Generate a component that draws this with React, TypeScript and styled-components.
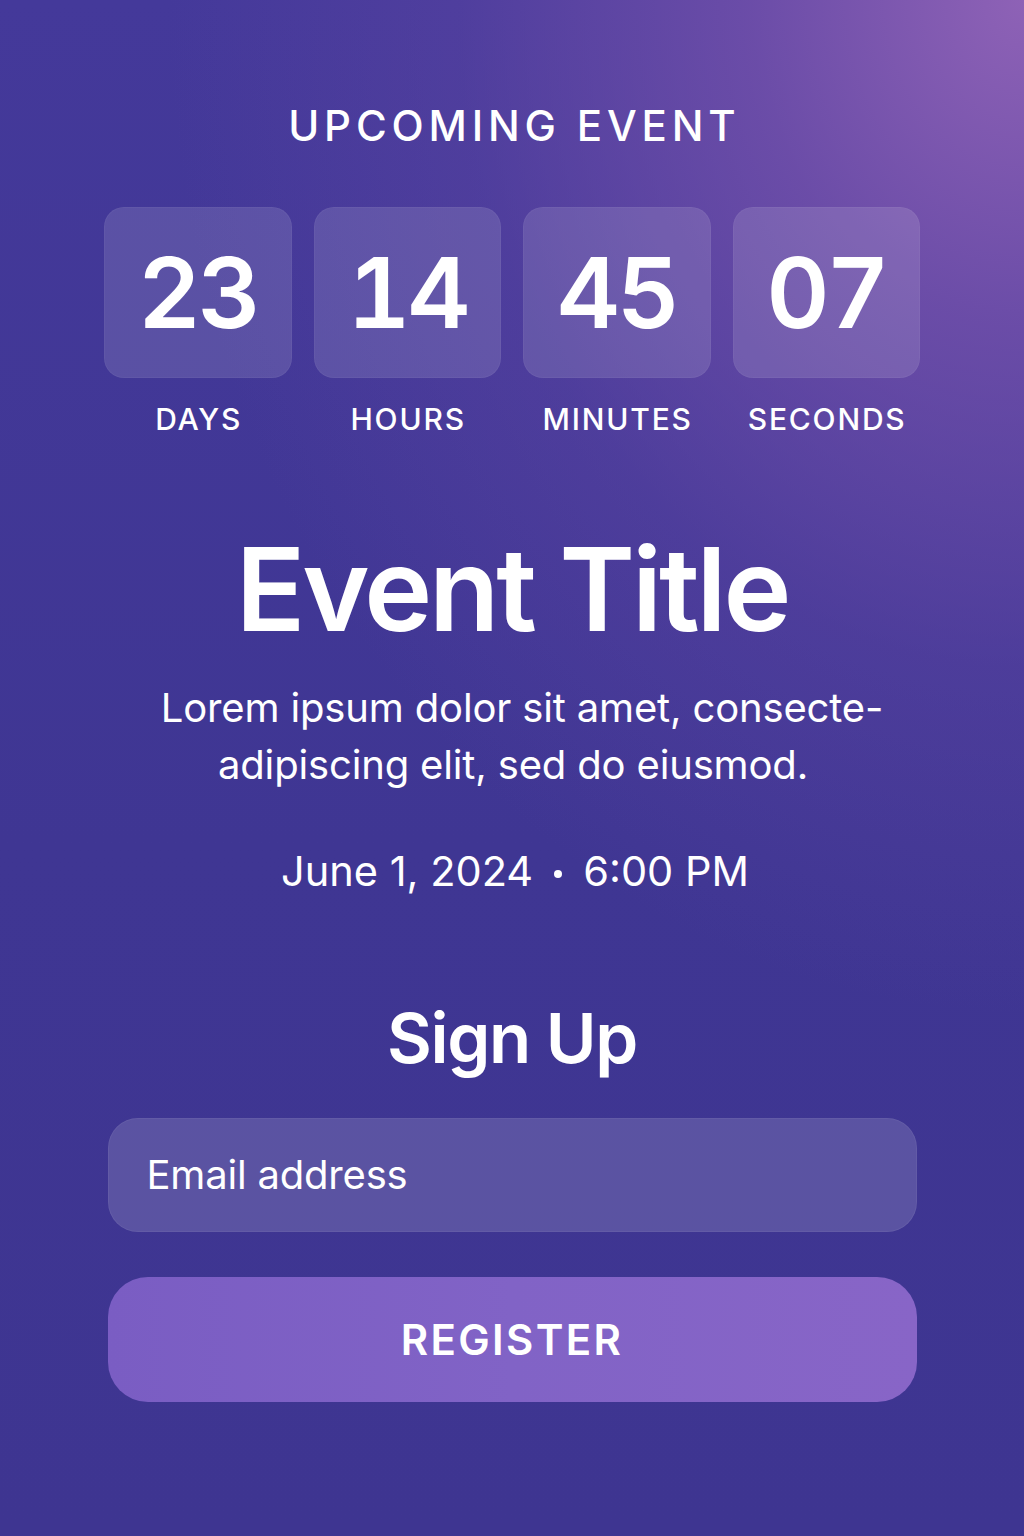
import React from "react";
import styled, { createGlobalStyle } from "styled-components";

const GlobalStyle = createGlobalStyle`
  html, body {
    margin: 0;
    padding: 0;
  }
  body {
    font-family: Inter, "Noto Sans", "Liberation Sans", sans-serif;
    color: #ffffff;
    background: #3d3592;
  }
  * { box-sizing: border-box; }
`;

const Page = styled.main`
  width: 1024px;
  height: 1536px;
  overflow: hidden;
  display: flex;
  flex-direction: column;
  align-items: center;
  padding-top: 101px;
  background:
    radial-gradient(ellipse 95% 75% at 100% 0%, rgba(142, 98, 182, 1) 0%, rgba(118, 82, 172, 0.78) 28%, rgba(96, 70, 164, 0.4) 58%, rgba(70, 58, 152, 0) 88%),
    linear-gradient(180deg, #44399a 0%, #3f3693 55%, #3e3591 100%);
`;

const Eyebrow = styled.h2`
  margin: 0;
  font-size: 42px;
  line-height: 1.2;
  font-weight: 500;
  letter-spacing: 0.115em;
  margin-right: -0.115em;
  text-transform: uppercase;
`;

const Countdown = styled.div`
  margin-top: 56px;
  width: 816px;
  display: grid;
  grid-template-columns: repeat(4, 1fr);
  column-gap: 22px;
`;

const Unit = styled.div`
  display: flex;
  flex-direction: column;
  align-items: center;
  gap: 23px;
`;

const Tile = styled.div`
  width: 100%;
  height: 171px;
  border-radius: 20px;
  background: rgba(255, 255, 255, 0.13);
  box-shadow: inset 0 0 0 1px rgba(255, 255, 255, 0.04);
  display: flex;
  align-items: center;
  justify-content: center;
  font-size: 98px;
  font-weight: 600;
  letter-spacing: -0.035em;
  line-height: 1;
  font-variant-numeric: tabular-nums;
`;

const UnitLabel = styled.div`
  font-size: 30px;
  line-height: 1.2;
  font-weight: 500;
  letter-spacing: 0.06em;
  margin-right: -0.06em;
  text-transform: uppercase;
`;

const Title = styled.h1`
  margin: 84px 0 0;
  font-size: 115px;
  line-height: 1.2;
  font-weight: 600;
  letter-spacing: -0.028em;
`;

const Description = styled.p`
  margin: 20px 0 0;
  width: 780px;
  padding-left: 14px;
  text-align: center;
  font-size: 40px;
  line-height: 57px;
  font-weight: 400;
  letter-spacing: -0.004em;
`;

const DescLine = styled.span<{ $shift?: number }>`
  display: block;
  margin-left: ${(p) => (p.$shift ? `${p.$shift}px` : "0")};
`;

const DateLine = styled.p`
  margin: 54px 0 0;
  padding-left: 6px;
  font-size: 41.5px;
  line-height: 1.2;
  font-weight: 400;
  display: flex;
  align-items: center;
`;

const Separator = styled.span`
  display: inline-block;
  width: 8px;
  height: 8px;
  border-radius: 50%;
  background: #ffffff;
  margin: 4px 21px 0 21px;
`;

const SignUpTitle = styled.h3`
  margin: 100px 0 0;
  font-size: 69px;
  line-height: 1.2;
  font-weight: 600;
  letter-spacing: -0.02em;
`;

const Form = styled.form`
  margin-top: 38px;
  width: 809px;
  display: flex;
  flex-direction: column;
  gap: 45px;
`;

const EmailInput = styled.input`
  width: 100%;
  height: 114px;
  border-radius: 30px;
  border: none;
  outline: none;
  padding: 0 39px;
  background: rgba(255, 255, 255, 0.15);
  box-shadow: inset 0 0 0 1px rgba(255, 255, 255, 0.05);
  color: #ffffff;
  font-family: inherit;
  font-size: 40px;
  font-weight: 400;
  letter-spacing: -0.005em;

  &::placeholder {
    color: #ffffff;
    opacity: 1;
  }
`;

const RegisterButton = styled.button`
  width: 100%;
  height: 125px;
  border-radius: 40px;
  border: none;
  background: linear-gradient(90deg, #7a5dc3 0%, #8163c6 50%, #8865c7 100%);
  color: #ffffff;
  font-family: inherit;
  font-size: 42px;
  font-weight: 600;
  letter-spacing: 0.055em;
  text-transform: uppercase;
  cursor: pointer;
`;

const units = [
  { value: "23", label: "Days" },
  { value: "14", label: "Hours" },
  { value: "45", label: "Minutes" },
  { value: "07", label: "Seconds" },
];

export default function App() {
  return (
    <>
      <GlobalStyle />
      <Page>
        <Eyebrow>Upcoming Event</Eyebrow>
        <Countdown>
          {units.map((u) => (
            <Unit key={u.label}>
              <Tile>{u.value}</Tile>
              <UnitLabel>{u.label}</UnitLabel>
            </Unit>
          ))}
        </Countdown>
        <Title>Event Title</Title>
        <Description>
          <DescLine $shift={6}>Lorem ipsum dolor sit amet, consecte-</DescLine>
          <DescLine $shift={-12}>adipiscing elit, sed do eiusmod.</DescLine>
        </Description>
        <DateLine>
          June 1, 2024
          <Separator aria-hidden="true" />
          6:00 PM
        </DateLine>
        <SignUpTitle>Sign Up</SignUpTitle>
        <Form onSubmit={(e) => e.preventDefault()}>
          <EmailInput type="email" placeholder="Email address" />
          <RegisterButton type="submit">Register</RegisterButton>
        </Form>
      </Page>
    </>
  );
}
